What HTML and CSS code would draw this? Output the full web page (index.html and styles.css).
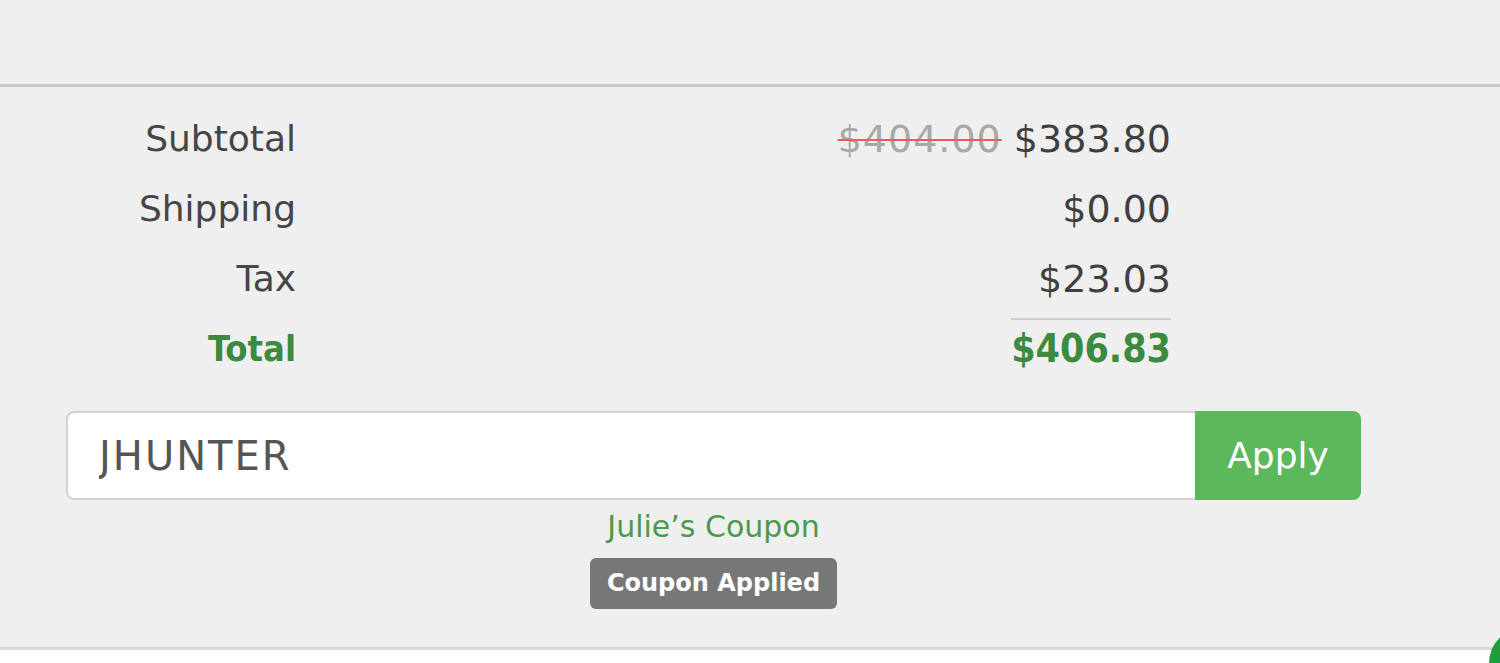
FILE: index.html
```html
<!DOCTYPE html>
<html lang="en">
<head>
<meta charset="utf-8">
<title>Order Summary</title>
<link rel="stylesheet" href="styles.css">
</head>
<body>
<div class="top-space"></div>
<section class="panel">
  <div class="panel-inner">
    <div class="summary">
      <div class="label">Subtotal</div>
      <div class="value"><span class="old-price">$404.00</span> <span>$383.80</span></div>
      <div class="label">Shipping</div>
      <div class="value">$0.00</div>
      <div class="label">Tax</div>
      <div class="value">$23.03</div>
      <div class="label total-label">Total</div>
      <div class="value total-value"><span class="total-amount">$406.83</span></div>
    </div>
    <div class="coupon-group">
      <input class="coupon-input" type="text" value="JHUNTER">
      <button class="apply-btn" type="button">Apply</button>
    </div>
    <div class="coupon-info">
      <div class="coupon-name">Julie’s Coupon</div>
      <span class="coupon-badge">Coupon Applied</span>
    </div>
  </div>
</section>
<div class="footer"></div>
<div class="chat-bubble"></div>
</body>
</html>
```
FILE: styles.css
```css
html, body {
  margin: 0;
  padding: 0;
}
body {
  background: #efefef;
  font-family: "DejaVu Sans", "Liberation Sans", sans-serif;
  color: #444;
  height: 663px;
  overflow: hidden;
}
.top-space {
  height: 84px;
}
.panel {
  border-top: 3px solid #cacaca;
  border-bottom: 3px solid #d8d8d8;
  padding: 17px 0 38px 0;
}
.panel-inner {
  width: 1295px;
  margin-left: 66px;
}
.summary {
  display: grid;
  grid-template-columns: 230px 875px;
  line-height: 70px;
}
.label {
  text-align: right;
  font-size: 36px;
  color: #454545;
}
.value {
  text-align: right;
  font-size: 38px;
  color: #3f3f3f;
}
.old-price {
  color: #a8a8a8;
  letter-spacing: 1px;
  text-decoration: line-through;
  text-decoration-color: #ec5b5b;
  text-decoration-thickness: 2px;
}
.total-label {
  font-family: "DejaVu Sans Condensed", "DejaVu Sans", sans-serif;
  font-weight: bold;
  font-size: 36px;
  color: #3b8a3f;
}
.total-value {
  font-family: "DejaVu Sans Condensed", "DejaVu Sans", sans-serif;
  font-weight: bold;
  font-size: 39px;
  color: #3b8a3f;
}
.total-amount {
  display: inline-block;
  line-height: 58px;
  border-top: 2px solid #cfcfcf;
}
.coupon-group {
  display: flex;
  margin-top: 27px;
  height: 89px;
}
.coupon-input {
  flex: 1;
  box-sizing: border-box;
  height: 89px;
  margin: 0;
  padding: 0 0 0 31px;
  border: 2px solid #d2d2d2;
  border-right: none;
  border-radius: 8px 0 0 8px;
  background: #fff;
  font-family: "DejaVu Sans", "Liberation Sans", sans-serif;
  font-size: 40px;
  letter-spacing: 2px;
  color: #555;
  outline: none;
}
.apply-btn {
  width: 166px;
  height: 89px;
  margin: 0;
  border: none;
  border-radius: 0 8px 8px 0;
  background: #5cb85c;
  color: #fff;
  font-family: "DejaVu Sans", "Liberation Sans", sans-serif;
  font-size: 36px;
  padding: 0;
}
.coupon-info {
  text-align: center;
  margin-top: 9px;
}
.coupon-name {
  font-size: 30px;
  line-height: 36px;
  color: #4a9a4c;
  margin-bottom: 13px;
}
.coupon-badge {
  display: inline-block;
  background: #777;
  color: #fff;
  font-weight: bold;
  font-size: 24px;
  line-height: 51px;
  padding: 0 17px;
  border-radius: 6px;
  vertical-align: top;
}
.footer {
  background: #fff;
  height: 20px;
}
.chat-bubble {
  position: fixed;
  left: 1489px;
  top: 628px;
  width: 70px;
  height: 70px;
  border-radius: 50%;
  background: #1f9d3d;
}
```
